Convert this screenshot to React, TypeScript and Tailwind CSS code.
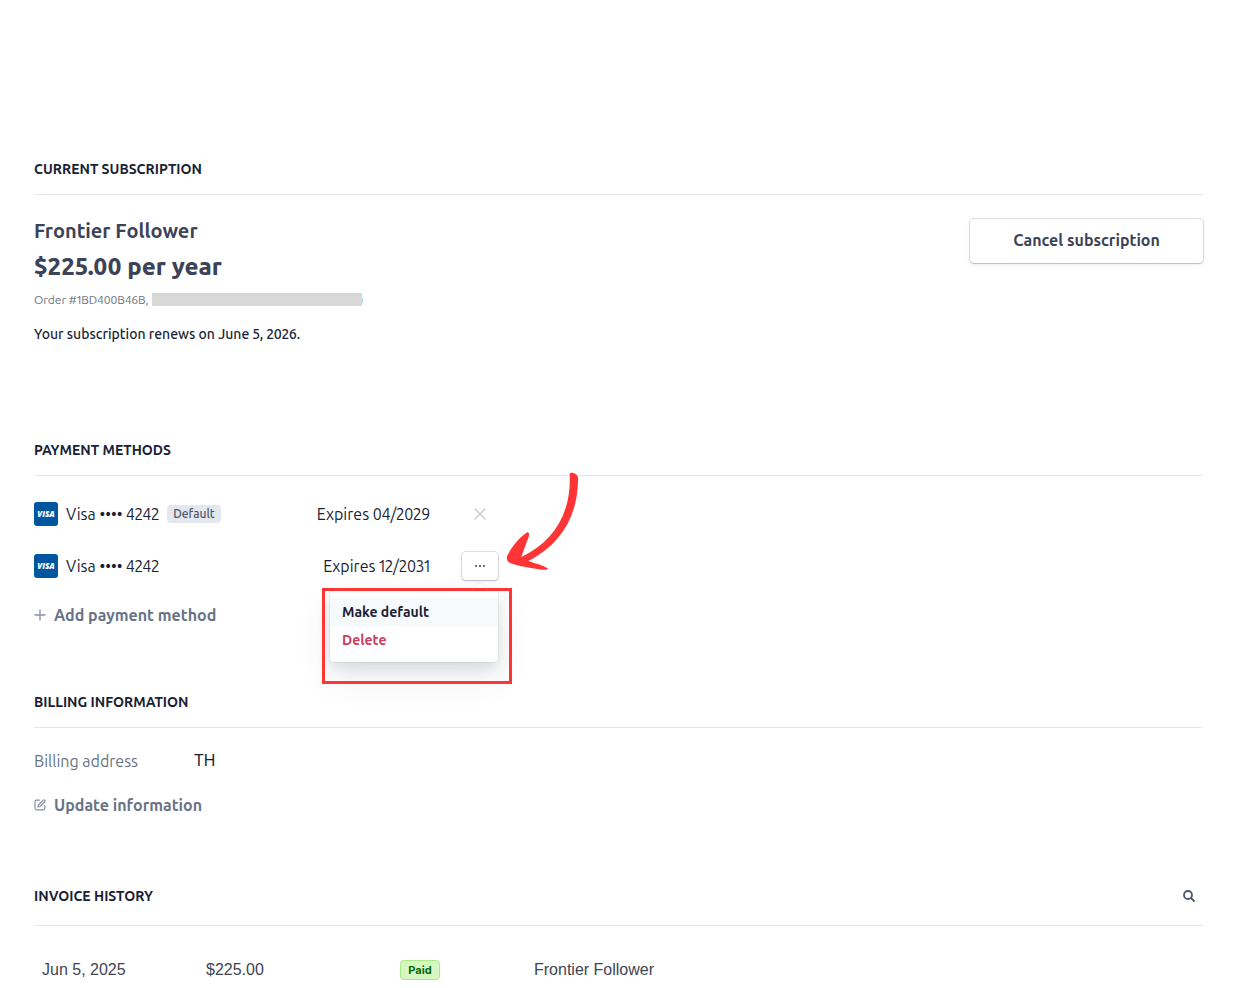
import type { ReactNode } from "react";

const ubuntu = "font-[Ubuntu,'Noto_Sans',sans-serif] proportional-nums";

const Section = ({
  title,
  className,
  headClassName = "pb-[15px]",
  action,
  children,
}: {
  title: string;
  className?: string;
  headClassName?: string;
  action?: ReactNode;
  children: ReactNode;
}) => {
  return (
    <section className={className}>
      <div className={`flex flex-row items-center justify-between border-b border-[#e3e8ee] ${headClassName}`}>
        <h2 className="text-sm leading-5 font-semibold text-[#1a1f36] uppercase">
          {title}
        </h2>
        {action}
      </div>
      {children}
    </section>
  );
};

const VisaIcon = () => {
  return (
    <svg viewBox="0 0 24 24" className="h-6 w-6 shrink-0" role="img" aria-label="Visa">
      <rect width="24" height="24" rx="3" fill="#00579f" />
      <text
        x="12"
        y="15"
        textAnchor="middle"
        fontSize="8"
        fontWeight="800"
        fontStyle="italic"
        fontFamily="Open Sans, sans-serif"
        fill="#fff"
      >
        VISA
      </text>
    </svg>
  );
};

const Card = ({ expires, isDefault, children }: { expires: string; isDefault?: boolean; children: ReactNode }) => {
  return (
    <li className="flex h-6 flex-row items-center text-base leading-6 text-[#1a1f36]">
      <VisaIcon />
      <span className="ml-2">Visa •••• 4242</span>
      {isDefault && (
        <span className="ml-2 rounded bg-[#e3e8ee] px-[6px] text-xs leading-[18px] font-medium text-[#4f566b]">
          Default
        </span>
      )}
      <span className="ml-auto">Expires {expires}</span>
      <div className="relative ml-[31px] flex w-[38px] shrink-0 justify-center">{children}</div>
    </li>
  );
};

const CardMenu = () => {
  return (
    <>
      <div className="absolute top-[35px] right-[1px] w-[168px] rounded bg-white py-2 text-sm leading-7 font-semibold shadow-[0_0_0_1px_rgba(60,66,87,0.06),0_7px_14px_rgba(60,66,87,0.12),0_15px_35px_rgba(60,66,87,0.1)]">
        <svg viewBox="0 0 20 10" className="absolute -top-2 right-2 h-[10px] w-5" aria-hidden="true">
          <path d="M0 10L8 2Q10 0 12 2L20 10Z" fill="#fff" stroke="#3c4257" strokeOpacity="0.08" />
        </svg>
        <button type="button" className="block w-full bg-[#f7fafc] px-3 text-left text-[#1a1f36]">
          Make default
        </button>
        <button type="button" className="block w-full px-3 text-left text-[#cd3d64]">
          Delete
        </button>
      </div>
      <div className="pointer-events-none absolute top-[33px] -left-[139px] h-24 w-[190px] border-3 border-[#ff3535]" />
      <svg viewBox="615 33 228 303" className="absolute -top-[84px] left-11 h-[101px] w-[76px]" aria-hidden="true">
        <path
          d="M809 46C807 36 820 37 829 44C834 48 835 54 834 63C832 170 782 253 685 303C704 310 728 315 743 325C746 329 736 330 724 329C690 324 652 318 630 309C619 303 618 291 624 283C640 255 658 232 682 217C687 216 689 223 686 230C678 252 671 270 664 291C760 246 814 160 809 46Z"
          fill="#ff3535"
        />
      </svg>
    </>
  );
};

const App = () => {
  return (
    <main className={`${ubuntu} bg-white pt-[159px] pr-[39px] pl-[34px]`}>
      <Section title="Current subscription">
        <div className="flex flex-row items-start justify-between pt-[21px]">
          <div className="text-[#3c4257]">
            <h3 className="text-xl leading-[30px] font-semibold">Frontier Follower</h3>
            <p className="text-2xl leading-[42px] font-extrabold">$225.00 per year</p>
            <p className="flex flex-row items-center text-xs leading-6 text-[#697386]">
              Order #1BD400B46B,
              <span className="z-10 mb-px ml-[3px] h-[13px] w-[210px] bg-[#d8d8d8]" />
              <span className="-ml-[2px]">)</span>
            </p>
            <p className="mt-3 text-sm leading-5 font-medium text-[#1a1f36]">
              Your subscription renews on June 5, 2026.
            </p>
          </div>
          <button
            type="button"
            className="mt-[3px] h-11 w-[233px] rounded bg-white pb-0.5 text-base font-semibold text-[#3c4257] shadow-[0_0_0_1px_rgba(60,66,87,0.16),0_1px_1px_rgba(0,0,0,0.12),0_2px_5px_rgba(60,66,87,0.08)]"
          >
            Cancel subscription
          </button>
        </div>
      </Section>

      <Section title="Payment methods" className="mt-24">
        <ul className="flex w-[465px] flex-col gap-7 pt-[26px]">
          <Card expires="04/2029" isDefault>
            <button type="button" aria-label="Remove card" className="p-[6px]">
              <svg viewBox="0 0 12 12" className="h-3 w-3" stroke="#c1c9d2" strokeWidth="1.3" strokeLinecap="round">
                <path d="M1 1L11 11M11 1L1 11" />
              </svg>
            </button>
          </Card>
          <Card expires="12/2031">
            <button
              type="button"
              aria-label="Card options"
              className="-my-[3px] flex h-7 w-9 items-center justify-center rounded bg-white shadow-[0_0_0_1px_rgba(60,66,87,0.16),0_1px_1px_rgba(0,0,0,0.12),0_2px_5px_rgba(60,66,87,0.08)]"
            >
              <svg viewBox="0 0 12 4" className="h-1 w-3" fill="#3c4257">
                <circle cx="2" cy="2" r="1" />
                <circle cx="6" cy="2" r="1" />
                <circle cx="10" cy="2" r="1" />
              </svg>
            </button>
            <CardMenu />
          </Card>
        </ul>
        <button
          type="button"
          className="mt-[25px] flex flex-row items-center gap-2 text-base leading-6 font-semibold text-[#697386]"
        >
          <svg viewBox="0 0 12 12" className="h-3 w-3" stroke="#8792a2" strokeWidth="1.3" strokeLinecap="round">
            <path d="M6 1V11M1 6H11" />
          </svg>
          Add payment method
        </button>
      </Section>

      <Section title="Billing information" className="mt-[65px]">
        <dl className="flex flex-row pt-[21px] text-base leading-6">
          <dt className="w-40 text-[#697386]">Billing address</dt>
          <dd className="font-['Liberation_Sans',sans-serif] text-[#1a1f36]">TH</dd>
        </dl>
        <button
          type="button"
          className="mt-5 flex flex-row items-center gap-2 text-base leading-6 font-semibold text-[#697386]"
        >
          <svg
            viewBox="0 0 12 12"
            className="h-3 w-3"
            fill="none"
            stroke="#8792a2"
            strokeWidth="1.2"
            strokeLinecap="round"
            strokeLinejoin="round"
          >
            <path d="M5.5 1.2H2.5Q1 1.2 1 2.7V9.3Q1 10.8 2.5 10.8H9.3Q10.8 10.8 10.8 9.3V6.5" />
            <path d="M4 8L4.4 6L9.2 1.2Q10 .6 10.8 1.3Q11.4 2 10.8 2.8L6 7.5Z" />
          </svg>
          Update information
        </button>
      </Section>

      <Section
        title="Invoice history"
        className="mt-[69px]"
        headClassName="pb-[19px]"
        action={
          <button type="button" aria-label="Search invoices" className="mr-2">
            <svg viewBox="0 0 12 12" className="h-3 w-3" fill="none" stroke="#4f566b" strokeWidth="1.8">
              <circle cx="5" cy="5" r="4" />
              <path d="M8 8L11 11" strokeLinecap="round" />
            </svg>
          </button>
        }
      >
        <table className="mt-8 w-full table-fixed text-left font-['Liberation_Sans',Arial,sans-serif] text-base text-[#414552]">
          <tbody>
            <tr>
              <td className="w-[164px] px-2">Jun 5, 2025</td>
              <td className="w-[194px] px-2">$225.00</td>
              <td className="w-[134px] px-2">
                <span className="block w-10 rounded border border-[#a6eb84] bg-[#d7f7c2] text-center font-[Inter,sans-serif] text-[11px] leading-[18px] font-bold text-[#006908]">
                  Paid
                </span>
              </td>
              <td className="px-2">Frontier Follower</td>
            </tr>
          </tbody>
        </table>
      </Section>
    </main>
  );
};

export default App;
